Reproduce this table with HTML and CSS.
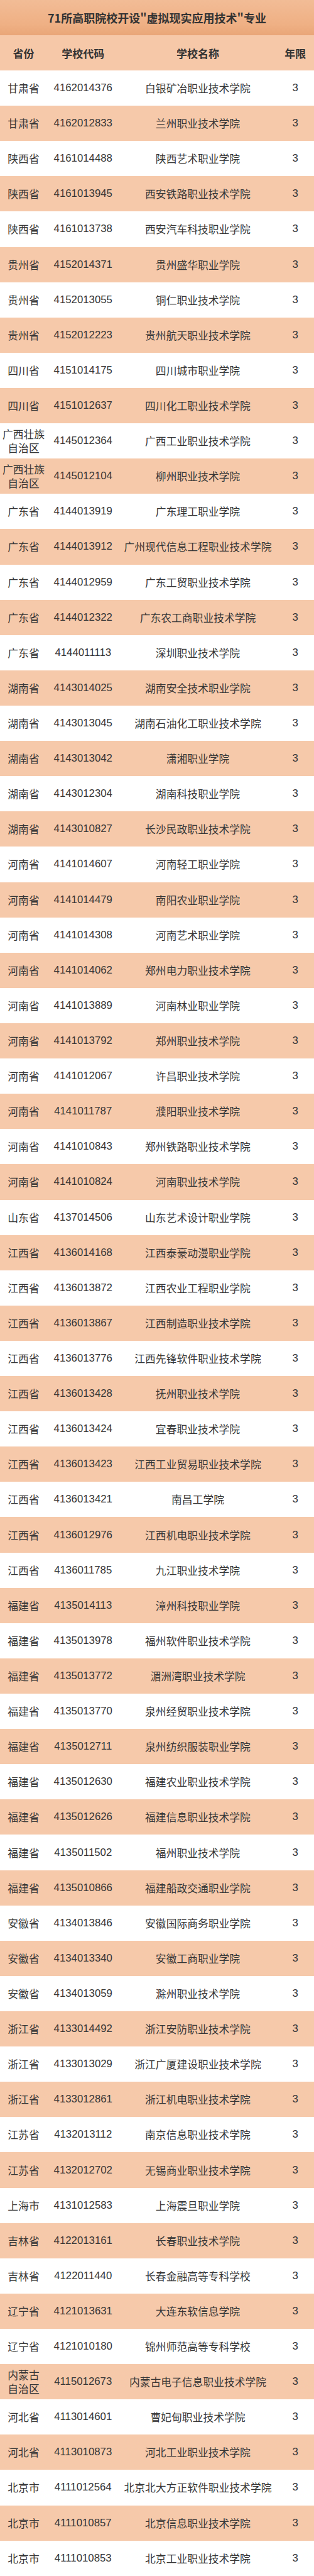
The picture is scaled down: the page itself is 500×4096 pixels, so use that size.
FILE: index.html
```html
<!DOCTYPE html>
<html lang="zh-CN">
<head>
<meta charset="utf-8">
<title>71所高职院校开设"虚拟现实应用技术"专业</title>
<link rel="stylesheet" href="styles.css">
</head>
<body>
<div class="sheet">
  <div class="title">71所高职院校开设"虚拟现实应用技术"专业</div>
  <div class="head">
    <div>省份</div><div>学校代码</div><div>学校名称</div><div>年限</div>
  </div>
  <div class="rows">
    <div class="row"><div>甘肃省</div><div class="code">4162014376</div><div>白银矿冶职业技术学院</div><div class="code">3</div></div>
    <div class="row"><div>甘肃省</div><div class="code">4162012833</div><div>兰州职业技术学院</div><div class="code">3</div></div>
    <div class="row"><div>陕西省</div><div class="code">4161014488</div><div>陕西艺术职业学院</div><div class="code">3</div></div>
    <div class="row"><div>陕西省</div><div class="code">4161013945</div><div>西安铁路职业技术学院</div><div class="code">3</div></div>
    <div class="row"><div>陕西省</div><div class="code">4161013738</div><div>西安汽车科技职业学院</div><div class="code">3</div></div>
    <div class="row"><div>贵州省</div><div class="code">4152014371</div><div>贵州盛华职业学院</div><div class="code">3</div></div>
    <div class="row"><div>贵州省</div><div class="code">4152013055</div><div>铜仁职业技术学院</div><div class="code">3</div></div>
    <div class="row"><div>贵州省</div><div class="code">4152012223</div><div>贵州航天职业技术学院</div><div class="code">3</div></div>
    <div class="row"><div>四川省</div><div class="code">4151014175</div><div>四川城市职业学院</div><div class="code">3</div></div>
    <div class="row"><div>四川省</div><div class="code">4151012637</div><div>四川化工职业技术学院</div><div class="code">3</div></div>
    <div class="row"><div class="two">广西壮族<br>自治区</div><div class="code">4145012364</div><div>广西工业职业技术学院</div><div class="code">3</div></div>
    <div class="row"><div class="two">广西壮族<br>自治区</div><div class="code">4145012104</div><div>柳州职业技术学院</div><div class="code">3</div></div>
    <div class="row"><div>广东省</div><div class="code">4144013919</div><div>广东理工职业学院</div><div class="code">3</div></div>
    <div class="row"><div>广东省</div><div class="code">4144013912</div><div>广州现代信息工程职业技术学院</div><div class="code">3</div></div>
    <div class="row"><div>广东省</div><div class="code">4144012959</div><div>广东工贸职业技术学院</div><div class="code">3</div></div>
    <div class="row"><div>广东省</div><div class="code">4144012322</div><div>广东农工商职业技术学院</div><div class="code">3</div></div>
    <div class="row"><div>广东省</div><div class="code">4144011113</div><div>深圳职业技术学院</div><div class="code">3</div></div>
    <div class="row"><div>湖南省</div><div class="code">4143014025</div><div>湖南安全技术职业学院</div><div class="code">3</div></div>
    <div class="row"><div>湖南省</div><div class="code">4143013045</div><div>湖南石油化工职业技术学院</div><div class="code">3</div></div>
    <div class="row"><div>湖南省</div><div class="code">4143013042</div><div>潇湘职业学院</div><div class="code">3</div></div>
    <div class="row"><div>湖南省</div><div class="code">4143012304</div><div>湖南科技职业学院</div><div class="code">3</div></div>
    <div class="row"><div>湖南省</div><div class="code">4143010827</div><div>长沙民政职业技术学院</div><div class="code">3</div></div>
    <div class="row"><div>河南省</div><div class="code">4141014607</div><div>河南轻工职业学院</div><div class="code">3</div></div>
    <div class="row"><div>河南省</div><div class="code">4141014479</div><div>南阳农业职业学院</div><div class="code">3</div></div>
    <div class="row"><div>河南省</div><div class="code">4141014308</div><div>河南艺术职业学院</div><div class="code">3</div></div>
    <div class="row"><div>河南省</div><div class="code">4141014062</div><div>郑州电力职业技术学院</div><div class="code">3</div></div>
    <div class="row"><div>河南省</div><div class="code">4141013889</div><div>河南林业职业学院</div><div class="code">3</div></div>
    <div class="row"><div>河南省</div><div class="code">4141013792</div><div>郑州职业技术学院</div><div class="code">3</div></div>
    <div class="row"><div>河南省</div><div class="code">4141012067</div><div>许昌职业技术学院</div><div class="code">3</div></div>
    <div class="row"><div>河南省</div><div class="code">4141011787</div><div>濮阳职业技术学院</div><div class="code">3</div></div>
    <div class="row"><div>河南省</div><div class="code">4141010843</div><div>郑州铁路职业技术学院</div><div class="code">3</div></div>
    <div class="row"><div>河南省</div><div class="code">4141010824</div><div>河南职业技术学院</div><div class="code">3</div></div>
    <div class="row"><div>山东省</div><div class="code">4137014506</div><div>山东艺术设计职业学院</div><div class="code">3</div></div>
    <div class="row"><div>江西省</div><div class="code">4136014168</div><div>江西泰豪动漫职业学院</div><div class="code">3</div></div>
    <div class="row"><div>江西省</div><div class="code">4136013872</div><div>江西农业工程职业学院</div><div class="code">3</div></div>
    <div class="row"><div>江西省</div><div class="code">4136013867</div><div>江西制造职业技术学院</div><div class="code">3</div></div>
    <div class="row"><div>江西省</div><div class="code">4136013776</div><div>江西先锋软件职业技术学院</div><div class="code">3</div></div>
    <div class="row"><div>江西省</div><div class="code">4136013428</div><div>抚州职业技术学院</div><div class="code">3</div></div>
    <div class="row"><div>江西省</div><div class="code">4136013424</div><div>宜春职业技术学院</div><div class="code">3</div></div>
    <div class="row"><div>江西省</div><div class="code">4136013423</div><div>江西工业贸易职业技术学院</div><div class="code">3</div></div>
    <div class="row"><div>江西省</div><div class="code">4136013421</div><div>南昌工学院</div><div class="code">3</div></div>
    <div class="row"><div>江西省</div><div class="code">4136012976</div><div>江西机电职业技术学院</div><div class="code">3</div></div>
    <div class="row"><div>江西省</div><div class="code">4136011785</div><div>九江职业技术学院</div><div class="code">3</div></div>
    <div class="row"><div>福建省</div><div class="code">4135014113</div><div>漳州科技职业学院</div><div class="code">3</div></div>
    <div class="row"><div>福建省</div><div class="code">4135013978</div><div>福州软件职业技术学院</div><div class="code">3</div></div>
    <div class="row"><div>福建省</div><div class="code">4135013772</div><div>湄洲湾职业技术学院</div><div class="code">3</div></div>
    <div class="row"><div>福建省</div><div class="code">4135013770</div><div>泉州经贸职业技术学院</div><div class="code">3</div></div>
    <div class="row"><div>福建省</div><div class="code">4135012711</div><div>泉州纺织服装职业学院</div><div class="code">3</div></div>
    <div class="row"><div>福建省</div><div class="code">4135012630</div><div>福建农业职业技术学院</div><div class="code">3</div></div>
    <div class="row"><div>福建省</div><div class="code">4135012626</div><div>福建信息职业技术学院</div><div class="code">3</div></div>
    <div class="row"><div>福建省</div><div class="code">4135011502</div><div>福州职业技术学院</div><div class="code">3</div></div>
    <div class="row"><div>福建省</div><div class="code">4135010866</div><div>福建船政交通职业学院</div><div class="code">3</div></div>
    <div class="row"><div>安徽省</div><div class="code">4134013846</div><div>安徽国际商务职业学院</div><div class="code">3</div></div>
    <div class="row"><div>安徽省</div><div class="code">4134013340</div><div>安徽工商职业学院</div><div class="code">3</div></div>
    <div class="row"><div>安徽省</div><div class="code">4134013059</div><div>滁州职业技术学院</div><div class="code">3</div></div>
    <div class="row"><div>浙江省</div><div class="code">4133014492</div><div>浙江安防职业技术学院</div><div class="code">3</div></div>
    <div class="row"><div>浙江省</div><div class="code">4133013029</div><div>浙江广厦建设职业技术学院</div><div class="code">3</div></div>
    <div class="row"><div>浙江省</div><div class="code">4133012861</div><div>浙江机电职业技术学院</div><div class="code">3</div></div>
    <div class="row"><div>江苏省</div><div class="code">4132013112</div><div>南京信息职业技术学院</div><div class="code">3</div></div>
    <div class="row"><div>江苏省</div><div class="code">4132012702</div><div>无锡商业职业技术学院</div><div class="code">3</div></div>
    <div class="row"><div>上海市</div><div class="code">4131012583</div><div>上海震旦职业学院</div><div class="code">3</div></div>
    <div class="row"><div>吉林省</div><div class="code">4122013161</div><div>长春职业技术学院</div><div class="code">3</div></div>
    <div class="row"><div>吉林省</div><div class="code">4122011440</div><div>长春金融高等专科学校</div><div class="code">3</div></div>
    <div class="row"><div>辽宁省</div><div class="code">4121013631</div><div>大连东软信息学院</div><div class="code">3</div></div>
    <div class="row"><div>辽宁省</div><div class="code">4121010180</div><div>锦州师范高等专科学校</div><div class="code">3</div></div>
    <div class="row"><div class="two">内蒙古<br>自治区</div><div class="code">4115012673</div><div>内蒙古电子信息职业技术学院</div><div class="code">3</div></div>
    <div class="row"><div>河北省</div><div class="code">4113014601</div><div>曹妃甸职业技术学院</div><div class="code">3</div></div>
    <div class="row"><div>河北省</div><div class="code">4113010873</div><div>河北工业职业技术学院</div><div class="code">3</div></div>
    <div class="row"><div>北京市</div><div class="code">4111012564</div><div>北京北大方正软件职业技术学院</div><div class="code">3</div></div>
    <div class="row"><div>北京市</div><div class="code">4111010857</div><div>北京信息职业技术学院</div><div class="code">3</div></div>
    <div class="row"><div>北京市</div><div class="code">4111010853</div><div>北京工业职业技术学院</div><div class="code">3</div></div>
  </div>
</div>
</body>
</html>
```

FILE: styles.css
```css
html, body {
  margin: 0;
  padding: 0;
  background: #ffffff;
}

.sheet {
  width: 500px;
  font-family: "Liberation Sans", "Noto Sans CJK SC", sans-serif;
  color: #363636;
}

.title {
  height: 56px;
  display: flex;
  align-items: center;
  justify-content: center;
  font-family: "Noto Sans CJK SC", sans-serif;
  font-weight: bold;
  font-size: 18px;
  color: #333333;
  background: linear-gradient(180deg, #f2bc96 0%, #efb084 70%, #e9a678 100%);
}

.head,
.row {
  display: grid;
  grid-template-columns: 75px 114.5px 251px 59.5px;
  align-items: center;
  justify-items: center;
  text-align: center;
}

.head {
  height: 56px;
  background: #f6c8a8;
  font-family: "Noto Sans CJK SC", sans-serif;
  font-weight: bold;
  font-size: 17px;
  color: #333333;
}

.row {
  height: 56.11px;
  background: #ffffff;
  font-family: "Noto Sans CJK SC", sans-serif;
  font-size: 16.8px;
  line-height: 22px;
}

.rows .row:nth-child(even) {
  background: #f6c9aa;
}

.code {
  font-family: "Liberation Sans", sans-serif;
  font-size: 16.8px;
  letter-spacing: 0;
}

.two {
  line-height: 22px;
}
```
